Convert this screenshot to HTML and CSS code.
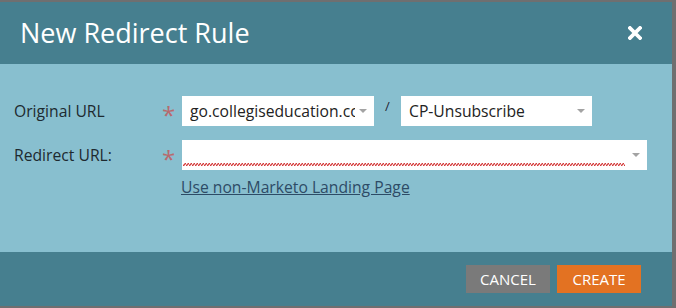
FILE: index.html
```html
<!DOCTYPE html>
<html lang="en">
<head>
    <meta charset="UTF-8">
    <title>New Redirect Rule</title>
    <link rel="stylesheet" href="styles.css">
</head>
<body>
    <div class="dialog">
        <div class="dialog-header">
            <h1>New Redirect Rule</h1>
            <span class="close-btn">
                <svg width="14" height="14" viewBox="0 0 14 14"><path d="M2 2 L12 12 M12 2 L2 12" stroke="#fff" stroke-width="3.8" stroke-linecap="square"/></svg>
            </span>
        </div>

        <div class="dialog-body">
            <div class="form-row">
                <label class="form-label">Original URL</label>
                <span class="required">*</span>
                <div class="field-group">
                    <div class="select select-domain">
                        <span class="select-text">go.collegiseducation.com</span>
                        <span class="arrow"></span>
                    </div>
                    <span class="slash">/</span>
                    <div class="select select-page">
                        <span class="select-text">CP-Unsubscribe</span>
                        <span class="arrow"></span>
                    </div>
                </div>
            </div>
            <div class="form-row">
                <label class="form-label">Redirect URL:</label>
                <span class="required">*</span>
                <div class="field-group">
                    <div class="select select-redirect">
                        <span class="squiggle"></span>
                        <span class="arrow"></span>
                    </div>
                </div>
            </div>
            <div class="link-row">
                <a href="#" class="alt-link">Use non-Marketo Landing Page</a>
            </div>
        </div>

        <div class="dialog-footer">
            <button class="btn btn-cancel">CANCEL</button>
            <button class="btn btn-create">CREATE</button>
        </div>
    </div>
</body>
</html>
```

FILE: styles.css
```css
body {
    margin: 0;
    font-family: "Open Sans", "Liberation Sans", sans-serif;
    background-color: #6f6f70;
}
.dialog {
    width: 672px;
    margin-top: 2px;
    background-color: #88bfcf;
}
/* header */
.dialog-header {
    height: 62px;
    background-color: #467f8f;
    display: flex;
    align-items: center;
    justify-content: space-between;
    padding: 0 30px 0 20px;
}
.dialog-header h1 {
    margin: 0;
    font-size: 27px;
    font-weight: normal;
    color: #fff;
    padding-bottom: 2px;
}
.close-btn {
    display: flex;
}
/* body */
.dialog-body {
    height: 188px;
    box-sizing: border-box;
    padding-top: 32px;
}
.form-row {
    display: flex;
    align-items: center;
    height: 30px;
    margin-bottom: 14px;
}
.form-label {
    width: 148px;
    padding-left: 14px;
    font-size: 15.7px;
    color: #1d2a30;
}
.required {
    width: 20px;
    font-size: 24px;
    color: #b86a6e;
    line-height: 1;
    padding-top: 8px;
    box-sizing: border-box;
}
.field-group {
    display: flex;
    align-items: center;
}
.select {
    position: relative;
    height: 30px;
    background-color: #fff;
    box-sizing: border-box;
    padding: 0 19px 0 8px;
    font-size: 15.7px;
    line-height: 30px;
    color: #222;
    overflow: hidden;
    white-space: nowrap;
}
.select-domain {
    width: 192px;
}
.select-page {
    width: 191px;
}
.select-redirect {
    width: 465px;
}
.select-text {
    display: block;
    overflow: hidden;
}
.arrow {
    position: absolute;
    right: 7px;
    top: 13px;
    border-left: 4.5px solid transparent;
    border-right: 4.5px solid transparent;
    border-top: 4px solid #a3a3a3;
}
.slash {
    width: 27px;
    text-align: center;
    font-size: 13px;
    color: #223;
    margin-top: -10px;
}
.squiggle {
    position: absolute;
    left: 1px;
    top: 23px;
    width: 442px;
    height: 3px;
    background-image: linear-gradient(135deg, transparent 40%, #d43c3c 40%, #d43c3c 60%, transparent 60%),
                      linear-gradient(45deg, transparent 40%, #d43c3c 40%, #d43c3c 60%, transparent 60%);
    background-size: 3px 3px;
    background-position: 0 0, 1.5px 0;
}
.link-row {
    padding-left: 181px;
    margin-top: -8px;
}
.alt-link {
    font-size: 15.7px;
    color: #2d4b66;
}
/* footer */
.dialog-footer {
    height: 54px;
    background-color: #467f8f;
    display: flex;
    justify-content: flex-end;
    align-items: flex-start;
    gap: 7px;
    padding: 13px 31px 0 0;
    box-sizing: border-box;
}
.btn {
    height: 28px;
    width: 84px;
    border: none;
    color: #fff;
    font-family: "Open Sans", "Liberation Sans", sans-serif;
    font-size: 15px;
    padding: 0;
    cursor: pointer;
}
.btn-cancel {
    background-color: #7a7a7a;
}
.btn-create {
    background-color: #e37222;
}
```
